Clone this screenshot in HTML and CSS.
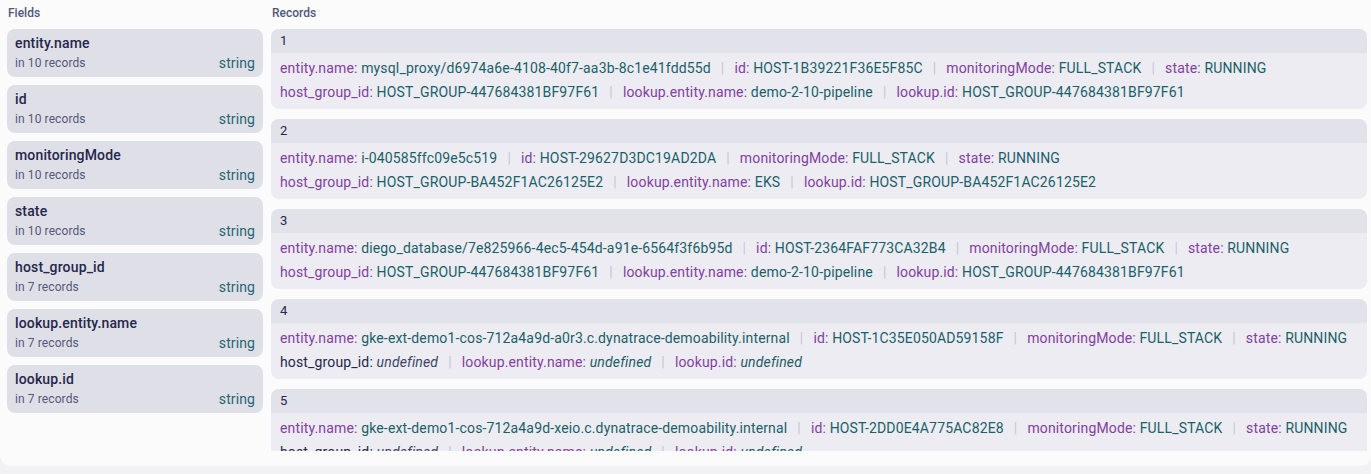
FILE: index.html
```html
<!DOCTYPE html>
<html>
<head>
<meta charset="utf-8">
<link rel="stylesheet" href="styles.css">
</head>
<body>
<div class="panel">
  <section class="fields">
    <div class="col-title">Fields</div>
    <div class="field-list">
      <div class="field"><div class="fname">entity.name</div><div class="fmeta"><span>in 10 records</span><span class="ftype">string</span></div></div>
      <div class="field"><div class="fname">id</div><div class="fmeta"><span>in 10 records</span><span class="ftype">string</span></div></div>
      <div class="field"><div class="fname">monitoringMode</div><div class="fmeta"><span>in 10 records</span><span class="ftype">string</span></div></div>
      <div class="field"><div class="fname">state</div><div class="fmeta"><span>in 10 records</span><span class="ftype">string</span></div></div>
      <div class="field"><div class="fname">host_group_id</div><div class="fmeta"><span>in 7 records</span><span class="ftype">string</span></div></div>
      <div class="field"><div class="fname">lookup.entity.name</div><div class="fmeta"><span>in 7 records</span><span class="ftype">string</span></div></div>
      <div class="field"><div class="fname">lookup.id</div><div class="fmeta"><span>in 7 records</span><span class="ftype">string</span></div></div>
    </div>
  </section>
  <section class="records">
    <div class="col-title">Records</div>
    <div class="record-list">
      <div class="record">
        <div class="rhead">1</div>
        <div class="rbody">
          <div class="row"><span class="k">entity.name:</span> <span class="v">mysql_proxy/d6974a6e-4108-40f7-aa3b-8c1e41fdd55d</span><span class="sep">|</span><span class="k">id:</span> <span class="v">HOST-1B39221F36E5F85C</span><span class="sep">|</span><span class="k">monitoringMode:</span> <span class="v">FULL_STACK</span><span class="sep">|</span><span class="k">state:</span> <span class="v">RUNNING</span></div>
          <div class="row"><span class="k">host_group_id:</span> <span class="v">HOST_GROUP-447684381BF97F61</span><span class="sep">|</span><span class="k">lookup.entity.name:</span> <span class="v">demo-2-10-pipeline</span><span class="sep">|</span><span class="k">lookup.id:</span> <span class="v">HOST_GROUP-447684381BF97F61</span></div>
        </div>
      </div>
      <div class="record">
        <div class="rhead">2</div>
        <div class="rbody">
          <div class="row"><span class="k">entity.name:</span> <span class="v">i-040585ffc09e5c519</span><span class="sep">|</span><span class="k">id:</span> <span class="v">HOST-29627D3DC19AD2DA</span><span class="sep">|</span><span class="k">monitoringMode:</span> <span class="v">FULL_STACK</span><span class="sep">|</span><span class="k">state:</span> <span class="v">RUNNING</span></div>
          <div class="row"><span class="k">host_group_id:</span> <span class="v">HOST_GROUP-BA452F1AC26125E2</span><span class="sep">|</span><span class="k">lookup.entity.name:</span> <span class="v">EKS</span><span class="sep">|</span><span class="k">lookup.id:</span> <span class="v">HOST_GROUP-BA452F1AC26125E2</span></div>
        </div>
      </div>
      <div class="record">
        <div class="rhead">3</div>
        <div class="rbody">
          <div class="row"><span class="k">entity.name:</span> <span class="v">diego_database/7e825966-4ec5-454d-a91e-6564f3f6b95d</span><span class="sep">|</span><span class="k">id:</span> <span class="v">HOST-2364FAF773CA32B4</span><span class="sep">|</span><span class="k">monitoringMode:</span> <span class="v">FULL_STACK</span><span class="sep">|</span><span class="k">state:</span> <span class="v">RUNNING</span></div>
          <div class="row"><span class="k">host_group_id:</span> <span class="v">HOST_GROUP-447684381BF97F61</span><span class="sep">|</span><span class="k">lookup.entity.name:</span> <span class="v">demo-2-10-pipeline</span><span class="sep">|</span><span class="k">lookup.id:</span> <span class="v">HOST_GROUP-447684381BF97F61</span></div>
        </div>
      </div>
      <div class="record">
        <div class="rhead">4</div>
        <div class="rbody">
          <div class="row"><span class="k">entity.name:</span> <span class="v">gke-ext-demo1-cos-712a4a9d-a0r3.c.dynatrace-demoability.internal</span><span class="sep">|</span><span class="k">id:</span> <span class="v">HOST-1C35E050AD59158F</span><span class="sep">|</span><span class="k">monitoringMode:</span> <span class="v">FULL_STACK</span><span class="sep">|</span><span class="k">state:</span> <span class="v">RUNNING</span></div>
          <div class="row"><span class="k k-dark">host_group_id:</span> <span class="undef undef-dark">undefined</span><span class="sep">|</span><span class="k">lookup.entity.name:</span> <span class="undef">undefined</span><span class="sep">|</span><span class="k">lookup.id:</span> <span class="undef">undefined</span></div>
        </div>
      </div>
      <div class="record">
        <div class="rhead">5</div>
        <div class="rbody">
          <div class="row"><span class="k">entity.name:</span> <span class="v">gke-ext-demo1-cos-712a4a9d-xeio.c.dynatrace-demoability.internal</span><span class="sep">|</span><span class="k">id:</span> <span class="v">HOST-2DD0E4A775AC82E8</span><span class="sep">|</span><span class="k">monitoringMode:</span> <span class="v">FULL_STACK</span><span class="sep">|</span><span class="k">state:</span> <span class="v">RUNNING</span></div>
          <div class="row"><span class="k k-dark">host_group_id:</span> <span class="undef undef-dark">undefined</span><span class="sep">|</span><span class="k">lookup.entity.name:</span> <span class="undef">undefined</span><span class="sep">|</span><span class="k">lookup.id:</span> <span class="undef">undefined</span></div>
        </div>
      </div>
    </div>
  </section>
</div>
</body>
</html>
```

FILE: styles.css
```css
* { box-sizing: border-box; }
html, body { margin: 0; padding: 0; }
body {
  background: #f2f2f5;
  font-family: Roboto, "Noto Sans", sans-serif;
  color: #2a2c4a;
  overflow: hidden;
}
.panel {
  height: 466px;
  background: #fbfbfc;
  border-radius: 0 0 10px 10px;
  display: flex;
  gap: 8px;
  padding: 0 4px 0 7px;
}
.col-title {
  height: 29px;
  padding-top: 5px;
  padding-left: 1px;
  font-size: 12px;
  line-height: 16px;
  font-weight: 500;
  color: #535779;
}
.fields { width: 256px; flex: none; }
.field-list { display: flex; flex-direction: column; gap: 8px; }
.field {
  background: #dfdfe8;
  border-radius: 8px;
  padding: 4px 8px 4px 8px;
  height: 48px;
}
.fname {
  font-size: 14px;
  line-height: 20px;
  font-weight: 500;
  letter-spacing: 0.15px;
  color: #25274a;
}
.fmeta {
  display: flex;
  justify-content: space-between;
  font-size: 12px;
  line-height: 20px;
  letter-spacing: 0.1px;
  color: #535779;
}
.ftype { font-size: 14px; color: #1f6670; }
.records { flex: 1; min-width: 0; display: flex; flex-direction: column; }
.record-list {
  height: 422px;
  overflow: hidden;
  display: flex;
  flex-direction: column;
  gap: 10px;
}
.record {
  flex: none;
  border-radius: 8px;
  overflow: hidden;
  background: #ececf2;
}
.rhead {
  height: 24px;
  background: #e2e2eb;
  padding-left: 9px;
  font-size: 13px;
  line-height: 24px;
  color: #25274a;
}
.rbody { padding: 3px 9px 5px; }
.row {
  font-size: 14px;
  line-height: 24px;
  letter-spacing: 0.15px;
  white-space: nowrap;
}
.k { color: #83409f; }
.k-dark { color: #25274a; }
.v { color: #1a5f69; }
.undef { color: #1f5c66; font-style: italic; }
.undef-dark { color: #3e4468; }
.sep { color: #c6c7d4; margin: 0 10px; }
```
